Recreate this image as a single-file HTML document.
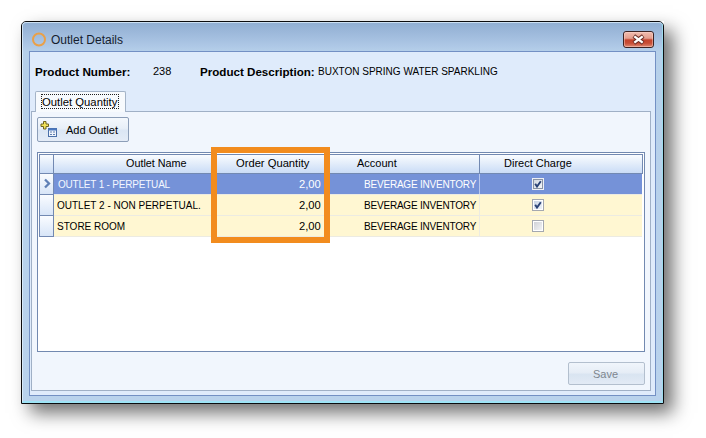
<!DOCTYPE html>
<html><head><meta charset="utf-8">
<style>
*{margin:0;padding:0;box-sizing:border-box}
html,body{width:706px;height:438px;overflow:hidden;background:#fff;font-family:"Liberation Sans",sans-serif}
.a{position:absolute}
.t{position:absolute;white-space:nowrap;font-size:11px;line-height:13px;color:#000}
</style></head><body>
<!-- shadow -->
<div class="a" style="left:21px;top:21px;width:643px;height:383px;box-shadow:9px 9px 17px 0px rgba(0,0,0,0.56)"></div>
<!-- window frame -->
<div class="a" style="left:21px;top:21px;width:643px;height:383px;border:1px solid #0c0c0e;border-radius:5px 5px 0 0;background:linear-gradient(#90aed2 0px,#9cb8da 10px,#aec8e6 24px,#b6d0ea 30px,#b9d2ec 100%)"></div>
<div class="a" style="left:22px;top:22px;width:641px;height:381px;border:1px solid rgba(230,245,255,0.7);border-right-color:#9edcee;border-bottom:2px solid #9ee4f6;border-radius:4px 4px 0 0"></div>
<!-- title -->
<div class="a" style="left:32px;top:32px;width:14px;height:14px;border:2.5px solid #eaa048;border-radius:50%;transform:translateY(0.5px)"></div>
<div class="t" style="left:51px;top:33px;font-size:12px;line-height:15px;color:#151d2e">Outlet Details</div>
<!-- close button -->
<div class="a" style="left:623px;top:31px;width:31px;height:17px;border:1px solid #3c2222;border-radius:3px;background:linear-gradient(#f0bcb0 0,#e6a090 40%,#d88070 47%,#c4432c 52%,#c84e36 75%,#de8a74 100%)"></div><div class="a" style="left:624px;top:32px;width:29px;height:15px;border:1px solid rgba(255,220,210,0.45);border-radius:2px"></div>
<svg class="a" style="left:631px;top:33px" width="15" height="13" viewBox="0 0 15 13"><path d="M2.8 3L12.2 10M12.2 3L2.8 10" stroke="#6a2c24" stroke-width="4.2" stroke-linecap="butt"/><path d="M3.3 3.4L11.7 9.6M11.7 3.4L3.3 9.6" stroke="#fff" stroke-width="2.4" stroke-linecap="butt"/></svg>
<!-- client area -->
<div class="a" style="left:29px;top:51px;width:627px;height:345px;border:1px solid #7390c4;background:#dfebfb"></div>
<div class="t" style="left:35px;top:65px;font-weight:bold;font-size:11.7px">Product Number:</div>
<div class="t" style="left:153px;top:65px">238</div>
<div class="t" style="left:200px;top:65px;font-weight:bold;font-size:11.6px">Product Description:</div>
<div class="t" style="left:318px;top:65px;font-size:10px">BUXTON SPRING WATER SPARKLING</div>
<!-- tab page -->
<div class="a" style="left:31px;top:111px;width:620px;height:280px;border:1px solid #a0b0c6;background:#f1f6fd"></div>
<!-- tab header -->
<div class="a" style="left:35px;top:91px;width:91px;height:21px;border:1px solid #a4b4c8;border-bottom:none;border-radius:2px 2px 0 0;background:#f7fafd"></div>
<div class="a" style="left:41px;top:94px;width:78px;height:15px;border:1px dotted #202020"></div>
<div class="t" style="left:42px;top:96px;font-size:11.3px">Outlet Quantity</div>
<!-- add outlet button -->
<div class="a" style="left:37px;top:117px;width:92px;height:25px;border:1px solid #8c9eb8;border-radius:2px;background:linear-gradient(#f4f8fd 0,#e8eff8 45%,#dbe6f4 55%,#e4ecf7 100%)"></div>
<svg class="a" style="left:40px;top:120px" width="18" height="18" viewBox="0 0 18 18">
<path d="M3.5 1.5h2.5v2.5h2.5v2.5h-2.5v2.5h-2.5v-2.5h-2.5v-2.5h2.5z" fill="#f4e45a" stroke="#6e6420" stroke-width="1"/>
<rect x="8.5" y="8.5" width="8" height="8" fill="#eef3fb" stroke="#4a6fa8"/>
<rect x="8.5" y="8.5" width="8" height="2" fill="#4a78c0"/>
<path d="M10 12h2M13 12h2M10 14.5h2M13 14.5h2" stroke="#6080b0"/>
</svg>
<div class="t" style="left:66px;top:124px">Add Outlet</div>
<!-- grid -->
<div class="a" style="left:37px;top:152px;width:608px;height:200px;border:1px solid #7289b0;background:#fff"></div>
<!-- header -->
<div class="a" style="left:39px;top:154px;width:604px;height:20px;border:1px solid #7289b2;background:linear-gradient(#fafcff,#e6effb 40%,#cadcf6)"></div>
<div class="a" style="left:53px;top:154px;width:1px;height:20px;background:#7289b2"></div>
<div class="a" style="left:213px;top:154px;width:1px;height:20px;background:#7289b2"></div>
<div class="a" style="left:329px;top:154px;width:1px;height:20px;background:#7289b2"></div>
<div class="a" style="left:479px;top:154px;width:1px;height:20px;background:#7289b2"></div>
<div class="t" style="left:126px;top:157px;font-size:10.8px">Outlet Name</div>
<div class="t" style="left:236px;top:157px;font-size:11.2px">Order Quantity</div>
<div class="t" style="left:357px;top:157px">Account</div>
<div class="t" style="left:504px;top:157px">Direct Charge</div>
<!-- indicator column -->
<div class="a" style="left:39px;top:173px;width:15px;height:64px;border:1px solid #7289b2;background:linear-gradient(#fafcff,#d6e4f7) 0 0/100% 21px repeat-y"></div>
<div class="a" style="left:39px;top:194px;width:15px;height:1px;background:#7289b2"></div>
<div class="a" style="left:39px;top:215px;width:15px;height:1px;background:#7289b2"></div>
<svg class="a" style="left:43px;top:178px" width="9" height="11" viewBox="0 0 9 11"><path d="M2 1.5L6 5.5L2 9.5" fill="none" stroke="#5f80b6" stroke-width="2.3"/></svg>
<!-- rows -->
<div class="a" style="left:54px;top:174px;width:588px;height:20px;background:#7592d8"></div>
<div class="a" style="left:54px;top:195px;width:588px;height:20px;background:#fff7d2"></div>
<div class="a" style="left:54px;top:216px;width:588px;height:20px;background:#fff7d2"></div>
<div class="a" style="left:54px;top:194px;width:588px;height:1px;background:#ecebe2"></div>
<div class="a" style="left:54px;top:215px;width:588px;height:1px;background:#ecebe2"></div>
<div class="a" style="left:54px;top:236px;width:588px;height:1px;background:#ecebe2"></div>
<div class="a" style="left:479px;top:174px;width:1px;height:62px;background:#ecebe2"></div>
<div class="a" style="left:479px;top:174px;width:1px;height:20px;background:#b8c8ee"></div>
<div class="t" style="left:58px;top:178px;color:#f4f7ff;font-size:10px;letter-spacing:-0.2px">OUTLET 1 - PERPETUAL</div>
<div class="t" style="left:57px;top:199px;font-size:10px">OUTLET 2 - NON PERPETUAL.</div>
<div class="t" style="left:57px;top:220px;font-size:10px">STORE ROOM</div>
<div class="t" style="left:299px;top:178px;color:#fff;font-size:11.2px">2,00</div>
<div class="t" style="left:299px;top:199px;font-size:11.2px">2,00</div>
<div class="t" style="left:299px;top:220px;font-size:11.2px">2,00</div>
<div class="t" style="left:364px;top:178px;color:#fff;font-size:10px;letter-spacing:-0.2px">BEVERAGE INVENTORY</div>
<div class="t" style="left:364px;top:199px;font-size:10px;letter-spacing:-0.2px">BEVERAGE INVENTORY</div>
<div class="t" style="left:364px;top:220px;font-size:10px;letter-spacing:-0.2px">BEVERAGE INVENTORY</div>
<!-- checkboxes -->
<div class="a" style="left:532px;top:178px;width:12px;height:12px;border:1px solid #eef0f6;background:#fff"><div class="a" style="left:0;top:0;width:10px;height:10px;border:1px solid #8a94a6;background:linear-gradient(135deg,#d2d8e2,#f4f6f9)"></div></div>
<div class="a" style="left:532px;top:199px;width:12px;height:12px;border:1px solid #a4a8b0;background:#fff"><div class="a" style="left:1px;top:1px;width:8px;height:8px;background:linear-gradient(135deg,#c8d4e6,#eef2f8)"></div></div>
<div class="a" style="left:532px;top:220px;width:12px;height:12px;border:1px solid #a4a8b0;background:#fff"><div class="a" style="left:1px;top:1px;width:8px;height:8px;background:linear-gradient(135deg,#d0d2d8,#f2f3f5)"></div></div>
<svg class="a" style="left:532px;top:178px" width="12" height="12" viewBox="0 0 12 12"><path d="M3.2 5.8L5 8.6L8.8 3.2" fill="none" stroke="#2a4276" stroke-width="1.9"/></svg>
<svg class="a" style="left:532px;top:199px" width="12" height="12" viewBox="0 0 12 12"><path d="M3.2 5.8L5 8.6L8.8 3.2" fill="none" stroke="#2a4276" stroke-width="1.9"/></svg>
<!-- orange highlight -->
<div class="a" style="left:211px;top:147px;width:119px;height:96px;border:6px solid #f28c1e"></div>
<!-- save button -->
<div class="a" style="left:568px;top:362px;width:77px;height:23px;border:1px solid #b3bfce;border-radius:2px;background:linear-gradient(#f0f5fb 0,#e6edf6 45%,#d9e4f1 55%,#e2eaf5 100%)"></div>
<div class="t" style="left:593px;top:368px;color:#7e868f">Save</div>
</body></html>
